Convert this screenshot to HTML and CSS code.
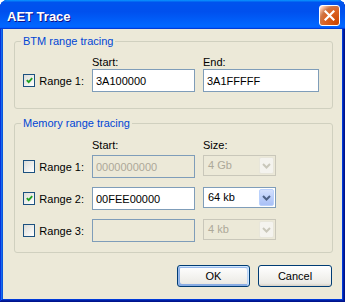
FILE: index.html
```html
<!DOCTYPE html>
<html lang="en">
<head>
  <meta charset="UTF-8" />
  <title>AET Trace</title>
  <link rel="stylesheet" href="styles.css">
</head>
<body>

  <div class="window">
    <div class="titlebar">
      <span class="title">AET Trace</span>
      <button class="close" aria-label="Close">
        <svg width="11" height="11" viewBox="0 0 11 11"><path d="M1.5 1.5 L9.5 9.5 M9.5 1.5 L1.5 9.5" stroke="#fff" stroke-width="2.2" stroke-linecap="square"/></svg>
      </button>
    </div>

    <div class="content">
      <!-- BTM -->
      <fieldset class="group">
        <legend>BTM range tracing</legend>
        <div class="cols">
          <span></span>
          <span class="head">Start:</span>
          <span class="head">End:</span>
        </div>
        <div class="cols row">
          <label class="check"><span class="box on"><svg width="7" height="7" viewBox="0 0 7 7"><path d="M0.8 3.2 L2.7 5.2 L6.2 1.2" stroke="#21a121" stroke-width="1.8" fill="none"/></svg></span>Range 1:</label>
          <input class="edit" type="text" value="3A100000">
          <input class="edit" type="text" value="3A1FFFFF">
        </div>
      </fieldset>

      <!-- Memory -->
      <fieldset class="group memory">
        <legend>Memory range tracing</legend>
        <div class="cols">
          <span></span>
          <span class="head">Start:</span>
          <span class="head">Size:</span>
        </div>
        <div class="cols row">
          <label class="check"><span class="box"></span>Range 1:</label>
          <input class="edit" type="text" value="0000000000" disabled>
          <div class="combo off">
            <span class="combo-text">4 Gb</span>
            <span class="drop"><svg width="9" height="6" viewBox="0 0 9 6"><path d="M1 1 L4.5 4.5 L8 1" stroke="#c9c7ba" stroke-width="2" fill="none"/></svg></span>
          </div>
        </div>
        <div class="cols row">
          <label class="check"><span class="box on"><svg width="7" height="7" viewBox="0 0 7 7"><path d="M0.8 3.2 L2.7 5.2 L6.2 1.2" stroke="#21a121" stroke-width="1.8" fill="none"/></svg></span>Range 2:</label>
          <input class="edit" type="text" value="00FEE00000">
          <div class="combo">
            <span class="combo-text">64 kb</span>
            <span class="drop"><svg width="9" height="6" viewBox="0 0 9 6"><path d="M1 1 L4.5 4.5 L8 1" stroke="#4d6185" stroke-width="2" fill="none"/></svg></span>
          </div>
        </div>
        <div class="cols row">
          <label class="check"><span class="box"></span>Range 3:</label>
          <input class="edit" type="text" value="" disabled>
          <div class="combo off">
            <span class="combo-text">4 kb</span>
            <span class="drop"><svg width="9" height="6" viewBox="0 0 9 6"><path d="M1 1 L4.5 4.5 L8 1" stroke="#c9c7ba" stroke-width="2" fill="none"/></svg></span>
          </div>
        </div>
      </fieldset>

      <div class="actions">
        <button class="btn default">OK</button>
        <button class="btn">Cancel</button>
      </div>
    </div>
  </div>

</body>
</html>
```

FILE: styles.css
```css
body {
  margin: 0;
  background: #fff;
  font-family: 'Liberation Sans', Arial, sans-serif;
  font-size: 11px;
  color: #000;
}

.window {
  width: 345px;
  height: 302px;
  box-sizing: border-box;
  display: flex;
  flex-direction: column;
  padding: 0 3px 3px;
  background: #0831d9;
  border-radius: 8px 8px 0 0;
  box-shadow: inset -1px -1px #00138c, inset 1px 1px #0831d9, inset -2px -2px #001ea0,
              inset 2px 2px #166aee, inset -3px -3px #003bda, inset 3px 3px #0855dd;
}

.titlebar {
  height: 29px;
  margin: 0 -3px;
  padding: 0 5px 0 7px;
  display: flex;
  align-items: flex-start;
  justify-content: space-between;
  border-radius: 7px 7px 0 0;
  background: linear-gradient(180deg, #0997ff, #0053ee 8%, #0050ee 40%, #06f 88%, #06f 93%, #005bff 95%, #003dd7 96%, #003dd7);
}

.title {
  margin-top: 9px;
  line-height: 15px;
  font-size: 13px;
  font-weight: bold;
  color: #fff;
  text-shadow: 1px 1px #0f1089;
}

.close {
  width: 21px;
  height: 21px;
  margin-top: 5px;
  padding: 0;
  border: 1px solid #fff;
  border-radius: 3px;
  display: flex;
  align-items: center;
  justify-content: center;
  background: radial-gradient(circle at 90% 90%, #cc4600 0%, #dc6527 55%, #cd7546 70%, #ffccb2 90%, #fff 100%);
}

.content {
  flex: 1;
  background: #ece9d8;
  padding: 6px 9px 0 11px;
  display: flex;
  flex-direction: column;
}

.group {
  margin: 0;
  padding: 8px 8px 16px;
  border: 1px solid #d0d0bf;
  border-radius: 3px;
  min-width: 0;
}

.group legend {
  padding: 0 2px;
  margin-left: -2px;
  line-height: 13px;
  color: #0046d5;
}

.memory {
  margin-top: 8px;
  padding-top: 9px;
  padding-bottom: 10px;
}

.cols {
  display: grid;
  grid-template-columns: 61px 103px 116px;
  column-gap: 8px;
  align-items: center;
}

.head {
  line-height: 13px;
}

.memory .row {
  margin-top: 9px;
}

.memory .row:nth-of-type(2) {
  margin-top: 3px;
}

.check {
  display: flex;
  align-items: center;
  white-space: nowrap;
}

.box {
  width: 13px;
  height: 13px;
  box-sizing: border-box;
  margin-right: 4px;
  border: 1px solid #1c5180;
  background: linear-gradient(135deg, #dcdcd7, #fff);
  display: flex;
  align-items: center;
  justify-content: center;
}

.edit {
  width: 100%;
  height: 23px;
  box-sizing: border-box;
  margin: 0;
  padding: 0 3px;
  border: 1px solid #7f9db9;
  background: #fff;
  font: inherit;
  color: #000;
  outline: none;
}

.edit:disabled {
  background: #ece9d8;
  color: #aca899;
  -webkit-text-fill-color: #aca899;
}

.combo {
  width: 73px;
  height: 21px;
  box-sizing: border-box;
  align-self: start;
  padding: 1px;
  border: 1px solid #7f9db9;
  background: #fff;
  display: flex;
}

.combo-text {
  flex: 1;
  padding-left: 3px;
  line-height: 17px;
}

.drop {
  width: 15px;
  box-sizing: border-box;
  border: 1px solid #bad1fc;
  border-radius: 2px;
  background: linear-gradient(180deg, #d4e0fd, #b8ccf9 60%, #a9c0f6);
  display: flex;
  align-items: center;
  justify-content: center;
}

.combo.off {
  border-color: #c9c7ba;
  background: #ece9d8;
  color: #aca899;
}

.combo.off .drop {
  border-color: #e8e6da;
  background: #f4f3ee;
}

.actions {
  margin-top: 12px;
  padding-right: 1px;
  display: flex;
  justify-content: flex-end;
  gap: 8px;
}

.btn {
  width: 74px;
  height: 22px;
  padding: 0;
  border: 1px solid #003c74;
  border-radius: 3px;
  background: linear-gradient(180deg, #fff, #ecebe6 86%, #d6d0c5);
  font: inherit;
  color: #000;
}

.btn.default {
  width: 73px;
  box-shadow: inset -1px 1px #cee7ff, inset 1px 2px #98b8ea, inset -2px 2px #bcd4f6,
              inset 1px -1px #89ade4, inset 2px -2px #89ade4;
}
```
